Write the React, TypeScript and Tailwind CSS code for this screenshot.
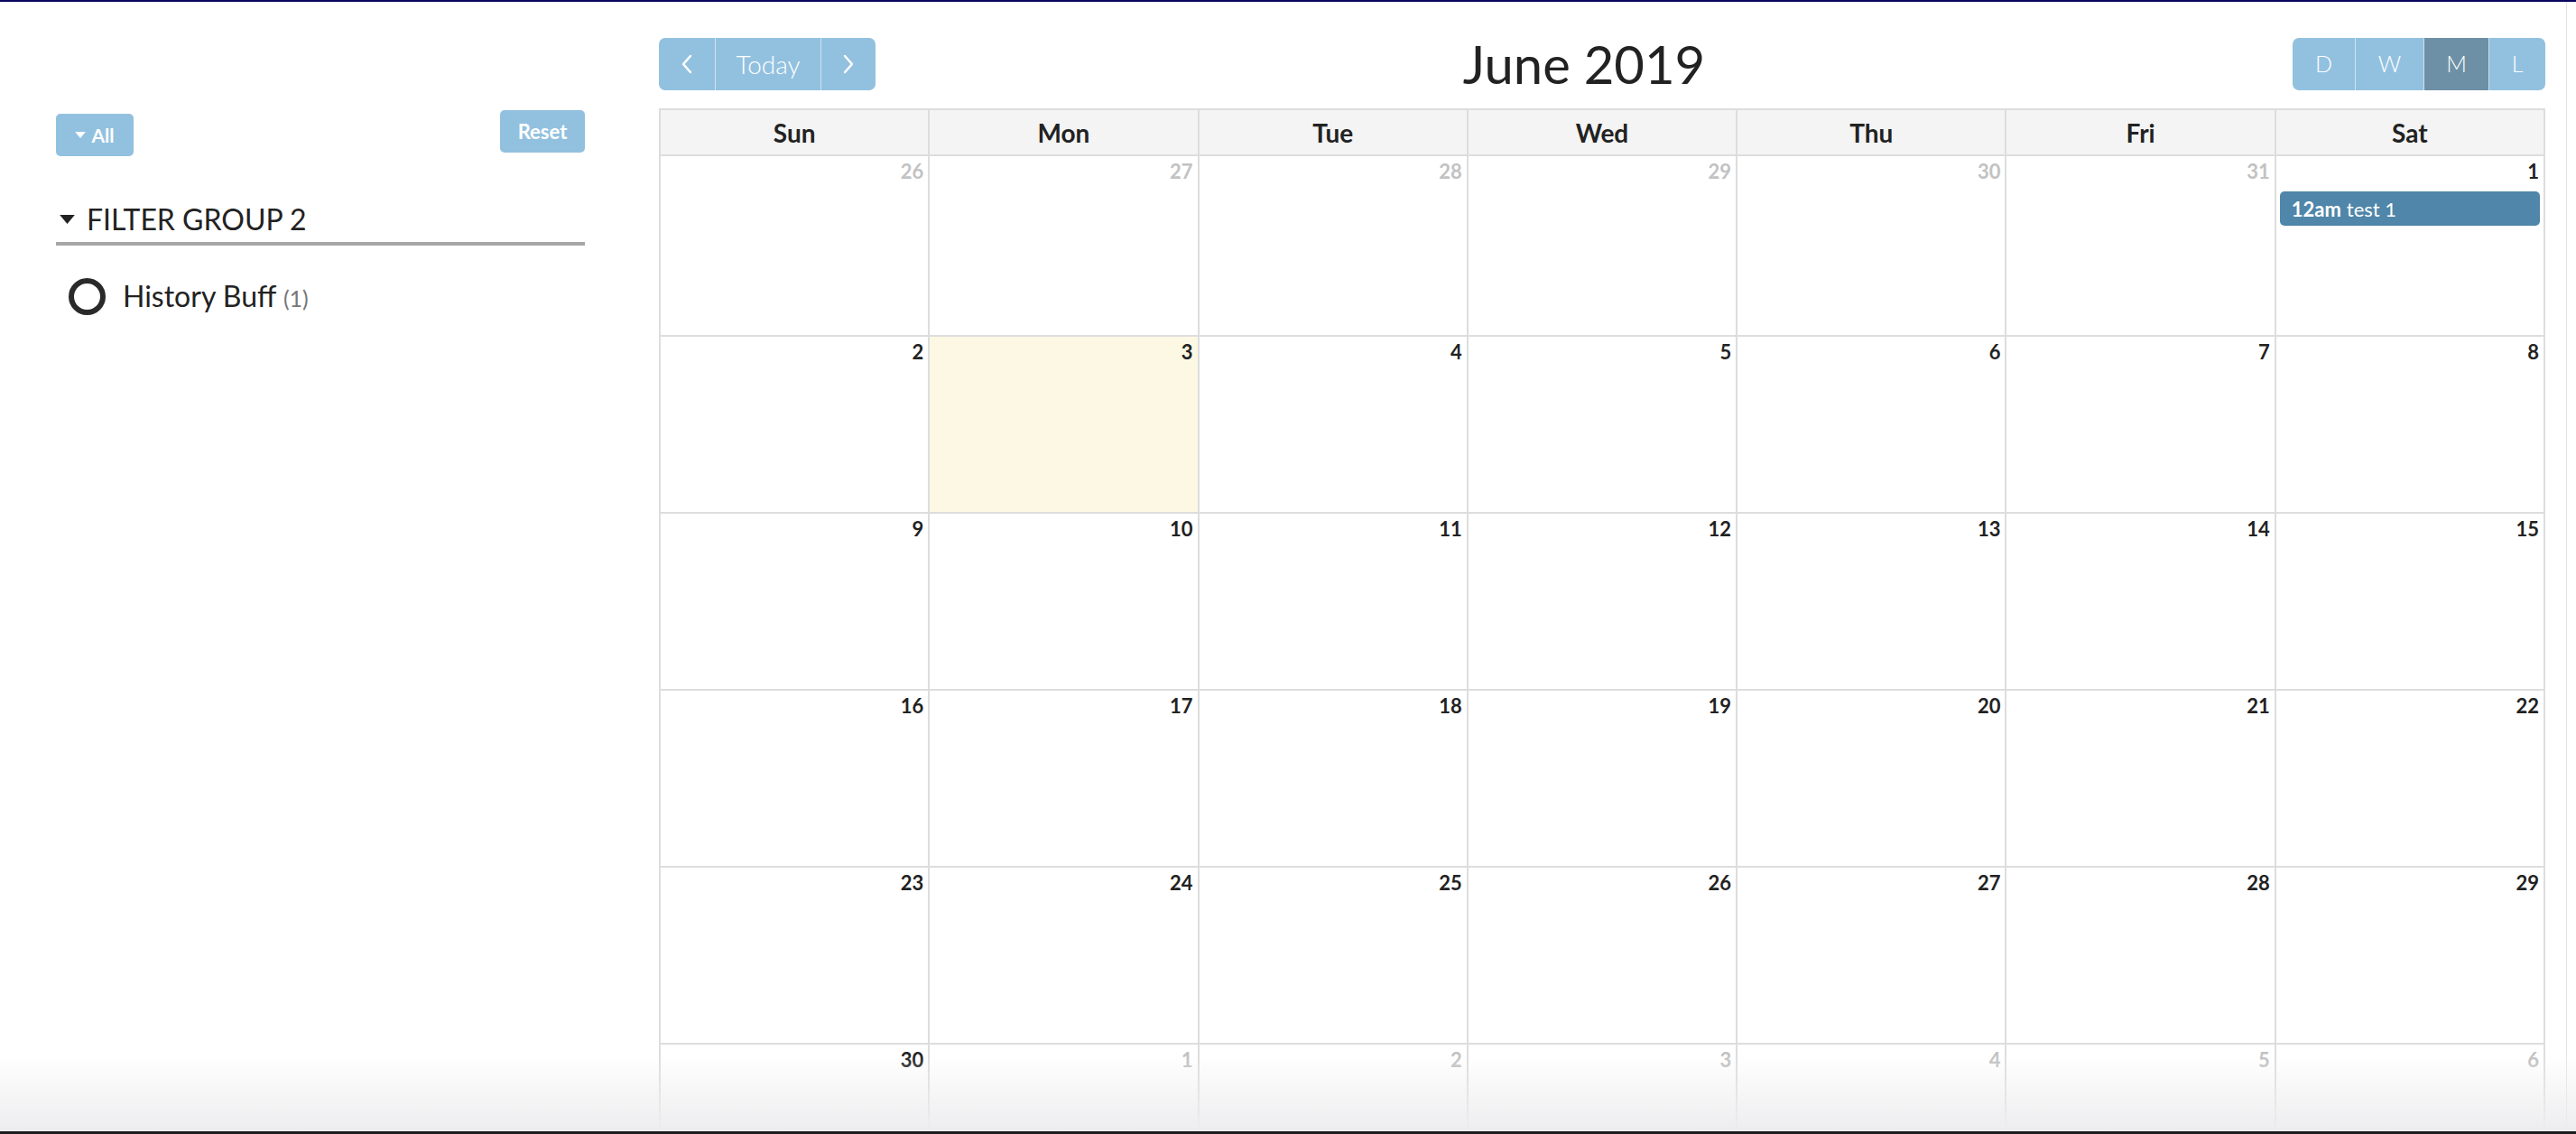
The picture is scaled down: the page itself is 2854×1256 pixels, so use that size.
import React from 'react';

type Day = { n: number; muted?: boolean; today?: boolean; event?: boolean };

const weekdays = ['Sun', 'Mon', 'Tue', 'Wed', 'Thu', 'Fri', 'Sat'];

// June 2019, month view starting on Sunday
const weeks: Day[][] = [
  [
    { n: 26, muted: true },
    { n: 27, muted: true },
    { n: 28, muted: true },
    { n: 29, muted: true },
    { n: 30, muted: true },
    { n: 31, muted: true },
    { n: 1, event: true },
  ],
  [2, 3, 4, 5, 6, 7, 8].map((n) => ({ n, today: n === 3 })),
  [9, 10, 11, 12, 13, 14, 15].map((n) => ({ n })),
  [16, 17, 18, 19, 20, 21, 22].map((n) => ({ n })),
  [23, 24, 25, 26, 27, 28, 29].map((n) => ({ n })),
  [
    { n: 30 },
    { n: 1, muted: true },
    { n: 2, muted: true },
    { n: 3, muted: true },
    { n: 4, muted: true },
    { n: 5, muted: true },
    { n: 6, muted: true },
  ],
];

function Chevron({ dir }: { dir: 'left' | 'right' }) {
  return (
    <svg width="14" height="22" viewBox="0 0 14 22" fill="none">
      <polyline
        points={dir === 'left' ? '11,2 3,11 11,20' : '3,2 11,11 3,20'}
        stroke="white"
        strokeWidth="2.4"
        strokeLinecap="round"
        strokeLinejoin="round"
      />
    </svg>
  );
}

function Caret({ className }: { className?: string }) {
  return (
    <svg className={className} viewBox="0 0 10 6" fill="currentColor">
      <polygon points="0,0 10,0 5,6" />
    </svg>
  );
}

function Sidebar() {
  return (
    <aside className="w-[586px] shrink-0 pt-[120px]">
      <div className="flex justify-between items-start">
        <button className="mt-[4px] w-[86px] h-[47px] rounded-[5px] bg-[#92c1df] text-white font-bold text-[21px] flex items-center justify-center gap-[6px]">
          <Caret className="w-[12px] h-[7px]" />
          <span>All</span>
        </button>
        <button className="w-[94px] h-[47px] rounded-[5px] bg-[#92c1df] text-white font-bold text-[22px] flex items-center justify-center">
          Reset
        </button>
      </div>

      <div className="mt-[52px] flex items-center gap-[13px] pl-[4px] pb-[7px] border-b-4 border-[#a6a6a6] text-[32px] leading-[36px] text-[#222]">
        <Caret className="w-[17px] h-[10px]" />
        <span>FILTER GROUP 2</span>
      </div>

      <div className="mt-[36px] flex items-center gap-[19px] pl-[14px]">
        <span className="w-[41px] h-[41px] rounded-full border-[6px] border-[#2a2a2a]" />
        <span className="text-[32px] leading-[36px] text-[#222]">
          History Buff <span className="text-[25px] text-[#777]">(1)</span>
        </span>
      </div>
    </aside>
  );
}

function Toolbar() {
  return (
    <div className="flex justify-between items-center h-[58px]">
      <div className="flex h-[58px] rounded-[7px] bg-[#92c1df] text-white overflow-hidden">
        <button className="w-[62px] flex items-center justify-center">
          <Chevron dir="left" />
        </button>
        <button className="w-[117px] border-l border-[#cfe2ef] font-light text-[28px] flex items-center justify-center">
          Today
        </button>
        <button className="w-[61px] border-l border-[#cfe2ef] flex items-center justify-center">
          <Chevron dir="right" />
        </button>
      </div>

      <h2 className="text-[58px] leading-[70px] text-[#222]">June 2019</h2>

      <div className="flex h-[58px] rounded-[7px] bg-[#92c1df] text-white overflow-hidden font-light text-[25px]">
        <button className="w-[69px] flex items-center justify-center">D</button>
        <button className="w-[76px] border-l border-[#cfe2ef] flex items-center justify-center">W</button>
        <button className="w-[72px] border-l border-[#cfe2ef] bg-[#6d90a6] flex items-center justify-center">M</button>
        <button className="w-[63px] border-l border-[#cfe2ef] flex items-center justify-center">L</button>
      </div>
    </div>
  );
}

function MonthGrid() {
  return (
    <div className="mt-[20px] border-l-2 border-t-2 border-[#dddddd]">
      <div className="grid grid-cols-7">
        {weekdays.map((d) => (
          <div
            key={d}
            className="h-[51px] border-r-2 border-b-2 border-[#dddddd] bg-[#f4f4f4] flex items-center justify-center text-[28px] font-bold text-[#222]"
          >
            {d}
          </div>
        ))}
      </div>
      {weeks.map((week, wi) => (
        <div key={wi} className="grid grid-cols-7">
          {week.map((day, di) => (
            <div
              key={di}
              className={`${wi === 0 ? 'h-[200px]' : 'h-[196px]'} border-r-2 border-b-2 border-[#dddddd] ${
                day.today ? 'bg-[#fcf8e3]' : 'bg-white'
              }`}
            >
              <div
                className={`pt-[4px] pr-[5px] text-right text-[22px] leading-[26px] font-bold ${
                  day.muted ? 'text-[#c2c2c2]' : 'text-[#222]'
                }`}
              >
                {day.n}
              </div>
              {day.event && (
                <div className="mt-[9px] ml-[4px] mr-[4px] h-[38px] rounded-[5px] bg-[#4f86a9] text-white text-[22px] flex items-center pl-[13px]">
                  <span className="font-bold">12am</span>
                  <span className="ml-[6px]">test 1</span>
                </div>
              )}
            </div>
          ))}
        </div>
      ))}
    </div>
  );
}

export default function App() {
  return (
    <div className="relative h-[1256px] overflow-hidden bg-white border-t-2 border-[#060660] font-[Lato,sans-serif] flex">
      <main className="flex-1 flex pl-[62px] pr-[23px]">
        <Sidebar />
        <section className="ml-[82px] flex-1 pt-[40px]">
          <Toolbar />
          <MonthGrid />
        </section>
      </main>
      <div className="w-[11px] shrink-0 border-l border-[#e4e4e4]" />

      {/* window shadow at the bottom edge */}
      <div className="pointer-events-none absolute inset-x-0 bottom-[3px] h-[85px] bg-linear-to-b from-transparent to-[#ededef]" />
      <div className="pointer-events-none absolute inset-x-0 bottom-0 h-[3px] bg-[#1c1c1e]" />
    </div>
  );
}
